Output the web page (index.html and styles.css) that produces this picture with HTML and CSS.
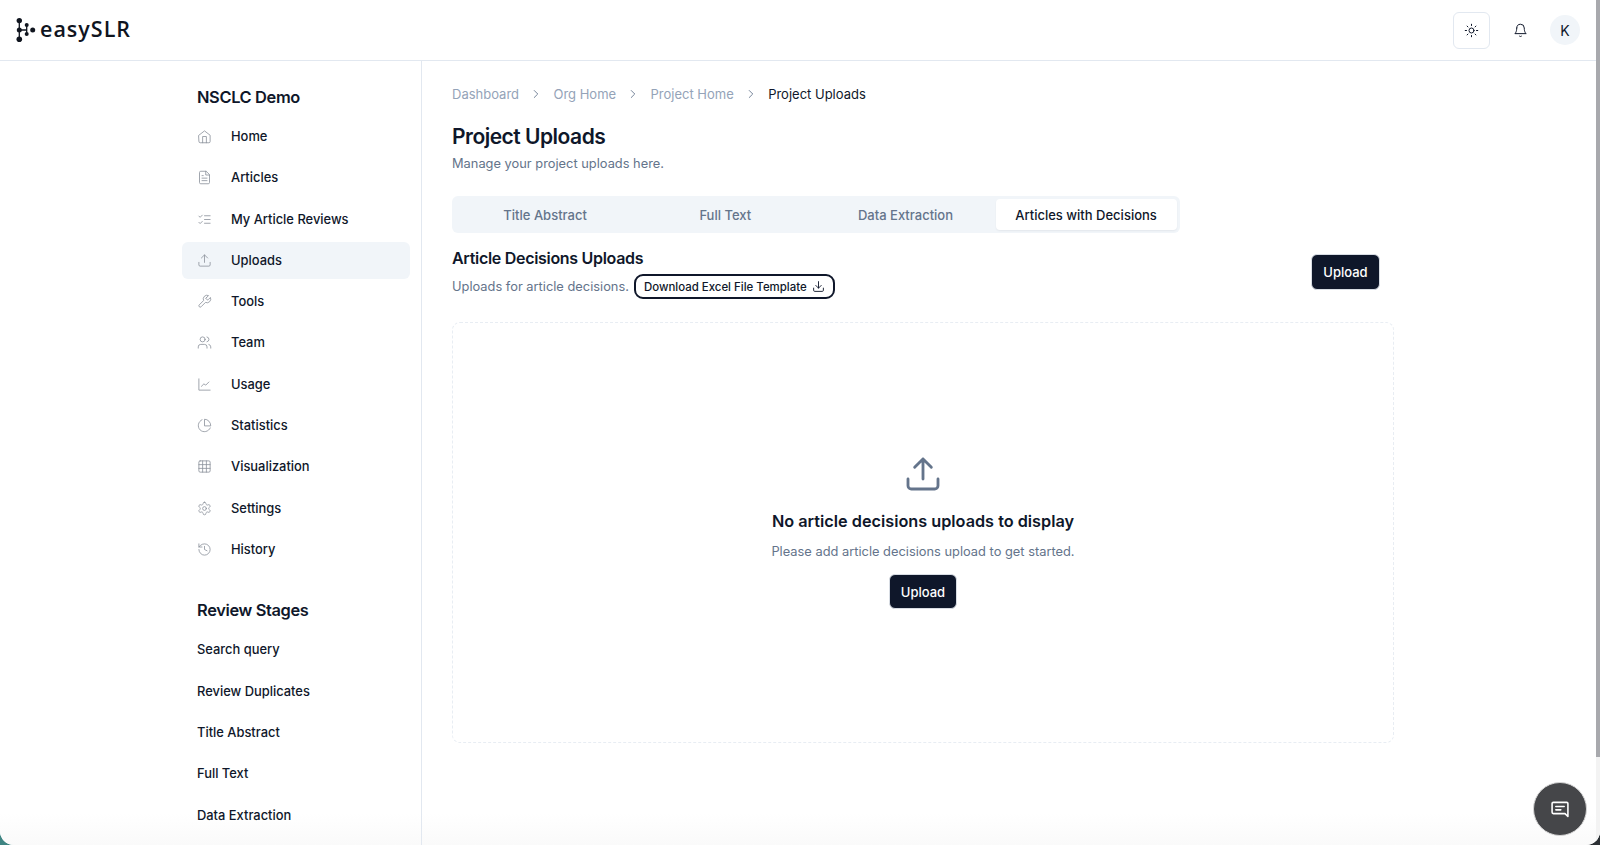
FILE: index.html
```html
<!DOCTYPE html>
<html lang="en">
<head>
<meta charset="utf-8">
<title>Project Uploads</title>
<link rel="stylesheet" href="styles.css">
</head>
<body>
<div class="window">
  <header class="topbar">
    <div class="brand">
      <svg class="brand-mark" viewBox="0 0 20 26" width="20" height="26" aria-hidden="true">
        <path class="brand-links" d="M3.3 3.6V22.3M10.7 8V17M3.3 13H10.700"/>
        <g class="brand-dots"><circle cx="3.3" cy="3.6" r="2.7"/><circle cx="3.3" cy="13" r="2.5"/><circle cx="3.3" cy="22.3" r="2.8"/><circle cx="10.7" cy="8" r="2"/><circle cx="10.7" cy="17" r="2"/><circle cx="16.7" cy="13" r="2.5"/></g>
      </svg>
      <span class="brand-name">easySLR</span>
    </div>
    <div class="top-actions">
      <button class="theme-btn" aria-label="Theme">
        <svg class="ic15" viewBox="0 0 24 24"><circle cx="12" cy="12" r="4"/><path d="M12 2v2M12 20v2M4.9 4.9l1.4 1.4M17.7 17.7l1.4 1.4M2 12h2M20 12h2M6.3 17.7l-1.4 1.4M19.1 4.9l-1.4 1.4"/></svg>
      </button>
      <svg class="ic15 bell" viewBox="0 0 24 24"><path d="M6 8a6 6 0 0 1 12 0c0 7 3 9 3 9H3s3-2 3-9"/><path d="M10.3 21a2 2 0 0 0 3.4 0"/></svg>
      <div class="avatar">K</div>
    </div>
  </header>
  <div class="body-row">
    <aside class="sidebar">
      <h2 class="side-title">NSCLC Demo</h2>
      <nav class="nav">
        <a class="nav-item"><svg class="nav-ic" viewBox="0 0 24 24"><path d="M3 10l9-7 9 7v10a2 2 0 0 1-2 2H5a2 2 0 0 1-2-2z"/><path d="M9 22v-10h6v10"/></svg>Home</a>
        <a class="nav-item"><svg class="nav-ic" viewBox="0 0 24 24"><path d="M14 2H6a2 2 0 0 0-2 2v16a2 2 0 0 0 2 2h12a2 2 0 0 0 2-2V8z"/><path d="M14 2v6h6M8 13h8M8 17h8M8 9h2"/></svg>Articles</a>
        <a class="nav-item"><svg class="nav-ic" viewBox="0 0 24 24"><path d="M3 6.5l2 2 3.5-3.5M3 16.5l2 2 3.5-3.5M12 6h9M12 12h9M12 18h9"/></svg>My Article Reviews</a>
        <a class="nav-item active"><svg class="nav-ic" viewBox="0 0 24 24"><path d="M21 15v4a2 2 0 0 1-2 2H5a2 2 0 0 1-2-2v-4M17 8l-5-5-5 5M12 3v12"/></svg>Uploads</a>
        <a class="nav-item"><svg class="nav-ic" viewBox="0 0 24 24"><path d="M14.7 6.3a1 1 0 0 0 0 1.4l1.6 1.6a1 1 0 0 0 1.4 0l3.77-3.77a6 6 0 0 1-7.94 7.94l-6.91 6.91a2.12 2.12 0 0 1-3-3l6.91-6.91a6 6 0 0 1 7.94-7.94l-3.76 3.76z"/></svg>Tools</a>
        <a class="nav-item"><svg class="nav-ic" viewBox="0 0 24 24"><circle cx="9" cy="7" r="4"/><path d="M16 21v-2a4 4 0 0 0-4-4H6a4 4 0 0 0-4 4v2M16 3.1a4 4 0 0 1 0 7.8M22 21v-2a4 4 0 0 0-3-3.9"/></svg>Team</a>
        <a class="nav-item"><svg class="nav-ic" viewBox="0 0 24 24"><path d="M3 3v18h18M7 15l4-4 3 2 5-5"/></svg>Usage</a>
        <a class="nav-item"><svg class="nav-ic" viewBox="0 0 24 24"><path d="M21.2 15.9A10 10 0 1 1 8 2.8"/><path d="M22 12A10 10 0 0 0 12 2v10z"/></svg>Statistics</a>
        <a class="nav-item"><svg class="nav-ic" viewBox="0 0 24 24"><rect x="3" y="3" width="18" height="18" rx="2"/><path d="M3 9h18M3 15h18M9 3v18M15 3v18"/></svg>Visualization</a>
        <a class="nav-item"><svg class="nav-ic" viewBox="0 0 24 24"><path d="M12.2 2h-.4a2 2 0 0 0-2 2v.2a2 2 0 0 1-1 1.7l-.4.3a2 2 0 0 1-2 0l-.2-.1a2 2 0 0 0-2.7.7l-.2.4a2 2 0 0 0 .7 2.7l.2.1a2 2 0 0 1 1 1.7v.5a2 2 0 0 1-1 1.8l-.2.1a2 2 0 0 0-.7 2.7l.2.4a2 2 0 0 0 2.7.7l.2-.1a2 2 0 0 1 2 0l.4.3a2 2 0 0 1 1 1.7v.2a2 2 0 0 0 2 2h.4a2 2 0 0 0 2-2v-.2a2 2 0 0 1 1-1.7l.4-.3a2 2 0 0 1 2 0l.2.1a2 2 0 0 0 2.7-.7l.2-.4a2 2 0 0 0-.7-2.7l-.2-.1a2 2 0 0 1-1-1.8v-.5a2 2 0 0 1 1-1.7l.2-.1a2 2 0 0 0 .7-2.7l-.2-.4a2 2 0 0 0-2.7-.7l-.2.1a2 2 0 0 1-2 0l-.4-.3a2 2 0 0 1-1-1.7V4a2 2 0 0 0-2-2z"/><circle cx="12" cy="12" r="3"/></svg>Settings</a>
        <a class="nav-item"><svg class="nav-ic" viewBox="0 0 24 24"><path d="M3 12a9 9 0 1 0 9-9 9.7 9.7 0 0 0-6.7 2.7L3 8"/><path d="M3 3v5h5M12 7v5l4 2"/></svg>History</a>
      </nav>
      <h2 class="side-title stages-title">Review Stages</h2>
      <nav class="nav">
        <a class="nav-item plain">Search query</a>
        <a class="nav-item plain">Review Duplicates</a>
        <a class="nav-item plain">Title Abstract</a>
        <a class="nav-item plain">Full Text</a>
        <a class="nav-item plain">Data Extraction</a>
      </nav>
    </aside>
    <main class="content">
      <div class="crumbs">
        <span>Dashboard</span><svg class="crumb-sep" viewBox="0 0 24 24"><path d="M9 18l6-6-6-6"/></svg>
        <span>Org Home</span><svg class="crumb-sep" viewBox="0 0 24 24"><path d="M9 18l6-6-6-6"/></svg>
        <span>Project Home</span><svg class="crumb-sep" viewBox="0 0 24 24"><path d="M9 18l6-6-6-6"/></svg>
        <span class="crumb-current">Project Uploads</span>
      </div>
      <h1 class="page-title">Project Uploads</h1>
      <p class="muted page-sub">Manage your project uploads here.</p>
      <div class="tabs">
        <div class="tab">Title Abstract</div>
        <div class="tab">Full Text</div>
        <div class="tab">Data Extraction</div>
        <div class="tab selected">Articles with Decisions</div>
      </div>
      <div class="section-head">
        <div>
          <h3 class="section-title">Article Decisions Uploads</h3>
          <div class="section-sub">
            <span class="muted">Uploads for article decisions.</span>
            <button class="template-btn">Download Excel File Template
              <svg class="ic12" viewBox="0 0 24 24"><path d="M21 15v4a2 2 0 0 1-2 2H5a2 2 0 0 1-2-2v-4M7 10l5 5 5-5M12 15V3"/></svg>
            </button>
          </div>
        </div>
        <button class="primary-btn">Upload</button>
      </div>
      <section class="empty">
        <svg class="empty-ic" viewBox="0 0 24 24"><path d="M21 15v4a2 2 0 0 1-2 2H5a2 2 0 0 1-2-2v-4M17 8l-5-5-5 5M12 3v12"/></svg>
        <h4 class="empty-title">No article decisions uploads to display</h4>
        <p class="muted empty-sub">Please add article decisions upload to get started.</p>
        <button class="primary-btn">Upload</button>
      </section>
    </main>
  </div>
  <div class="scrollbar"></div>
  <button class="chat" aria-label="Chat">
    <svg class="chat-ic" viewBox="0 0 24 24"><path d="M4 4h16a1.5 1.5 0 0 1 1.5 1.5V21l-3.5-3.5H4A1.5 1.5 0 0 1 2.500 16V5.500A1.500 1.500 0 0 1 4 4z"/><path d="M7 9h10M7 13h6"/></svg>
  </button>
</div>
</body>
</html>
```

FILE: styles.css
```css
* { box-sizing: border-box; }
html, body { margin: 0; height: 100%; overflow: hidden; }
body {
  background: linear-gradient(90deg, #3f8583 0 50%, #2c3135 50% 100%);
  font-family: Inter, "Liberation Sans", sans-serif;
  color: #0f172a;
  font-size: 14px;
}
svg { fill: none; stroke: currentColor; stroke-width: 2; stroke-linecap: round; stroke-linejoin: round; }
button { font-family: inherit; cursor: pointer; }
h1, h2, h3, h4, p { margin: 0; }

.window {
  position: relative;
  height: 845px;
  background: #fff;
  border-radius: 0 0 14px 14px;
  overflow: hidden;
  display: flex;
  flex-direction: column;
}
.topbar {
  height: 61px;
  flex: none;
  border-bottom: 1px solid #e2e8f0;
  display: flex;
  align-items: center;
  justify-content: space-between;
  padding: 0 20px 0 16px;
}
.brand { display: flex; align-items: center; gap: 4px; }
.brand-mark { flex: none; }
.brand-links { stroke: #10151f; stroke-width: 1.3; }
.brand-dots { fill: #10151f; stroke: none; }
.brand-name { font-family: "Open Sans", Lato, sans-serif; font-size: 21.5px; line-height: 26px; padding-bottom: 2px; font-weight: 600; letter-spacing: 1px; color: #10151f; }
.top-actions { display: flex; align-items: center; }
.theme-btn {
  width: 37px; height: 37px;
  display: flex; align-items: center; justify-content: center;
  background: #fff;
  border: 1px solid #e2e8f0;
  border-radius: 6px;
  padding: 0;
  color: #0f172a;
}
.ic15 { width: 15px; height: 15px; color: #0f172a; stroke-width: 1.6; }
.bell { margin-left: 23px; }
.avatar {
  width: 30px; height: 30px;
  margin-left: 22px;
  border-radius: 50%;
  background: #f1f5f9;
  display: flex; align-items: center; justify-content: center;
  font-size: 14px;
}

.body-row { flex: 1; display: flex; min-height: 0; background: linear-gradient(#fff 0 96%, #fafafa 100%); }
.sidebar {
  width: 422px;
  flex: none;
  border-right: 1px solid #e2e8f0;
  padding: 25px 11px 0 182px;
}
.side-title { font-size: 16.4px; line-height: 22px; font-weight: 600; letter-spacing: -0.35px; padding-left: 15px; color: #0f172a; }
.stages-title { margin-top: 31.5px; }
.nav { display: flex; flex-direction: column; gap: 4.3px; margin-top: 10px; }
.nav-item {
  height: 37px;
  display: flex; align-items: center;
  padding-left: 15px;
  border-radius: 6px;
  font-size: 12.9px;
  font-weight: 500;
  color: #0f172a;
}
.nav-item.active { background: #f1f5f9; }
.nav-ic { width: 15px; height: 15px; margin-right: 19px; color: #8b919b; stroke-width: 1.3; flex: none; }

.content { flex: 1; min-width: 0; padding: 24px 0 0 30px; }
.crumbs { display: flex; align-items: center; font-size: 13px; line-height: 18px; color: #94a3b8; }
.crumbs span { font-weight: 400; }
.crumb-sep { width: 14px; height: 14px; margin: 0 10.2px; color: #64748b; stroke-width: 1.5; }
.crumb-current { color: #0f172a; }
.page-title { margin-top: 20px; font-size: 21px; line-height: 28px; font-weight: 600; letter-spacing: -0.5px; color: #0f172a; }
.muted { color: #64748b; font-size: 12.85px; }
.page-sub { margin-top: 4px; line-height: 18px; }
.tabs {
  width: fit-content;
  margin-top: 23px;
  height: 37px;
  padding: 3px;
  display: flex;
  gap: 0;
  background: #f1f5f9;
  border-radius: 6px;
}
.tab {
  width: 180.2px;
  display: flex; align-items: center; justify-content: center;
  font-size: 13px; font-weight: 500;
  color: #64748b;
  border-radius: 4px;
}
.tab.selected { width: 181px; background: #fff; color: #0f172a; box-shadow: 0 1px 2px rgba(15,23,42,.06); }
.section-head {
  width: 928px;
  margin-top: 13px;
  display: flex; align-items: center; justify-content: space-between;
}
.section-title { font-size: 16px; line-height: 24px; font-weight: 600; letter-spacing: -0.3px; color: #0f172a; }
.section-sub { display: flex; align-items: center; gap: 5px; margin-top: 4px; }
.template-btn {
  height: 25px;
  padding: 0 8px;
  display: flex; align-items: center; gap: 5px;
  background: #fff;
  border: 2px solid #0f172a;
  border-radius: 9px;
  font-size: 11.45px;
  font-weight: 500;
  color: #0f172a;
}
.ic12 { width: 13px; height: 13px; stroke-width: 1.7; }
.primary-btn {
  width: 68px; height: 35px;
  background: #0f172a;
  color: #fff;
  border: 1px solid #d8dde4;
  border-radius: 6px;
  font-size: 13px;
  font-weight: 500;
  padding: 0;
}
.section-head .primary-btn { width: 69px; height: 36px; margin-bottom: 2px; }
.empty {
  width: 942px;
  height: 421px;
  margin-top: 23px;
  border: 1px dashed #e8edf3;
  border-radius: 8px;
  display: flex; flex-direction: column; align-items: center;
  padding-top: 131px;
}
.empty-ic { width: 40px; height: 40px; color: #64748b; stroke-width: 1.7; }
.empty-title { margin-top: 15px; font-size: 16.25px; line-height: 24px; font-weight: 600; letter-spacing: 0; color: #0f172a; }
.empty-sub { margin-top: 10px; line-height: 18px; }
.empty-sub + .primary-btn { margin-top: 13px; }

.scrollbar { position: absolute; top: 0; right: 0; bottom: 0; width: 4px; background: linear-gradient(#a8a9ad 0 757px, #f3f3f3 757px); }
.chat {
  position: absolute;
  right: 13px; bottom: 9px;
  width: 54px; height: 54px;
  border-radius: 50%;
  border: 1px solid #d5d5d5;
  background: #454649;
  display: flex; align-items: center; justify-content: center;
  padding: 0;
}
.chat-ic { width: 20px; height: 20px; color: #fff; stroke-width: 1.9; }
```
